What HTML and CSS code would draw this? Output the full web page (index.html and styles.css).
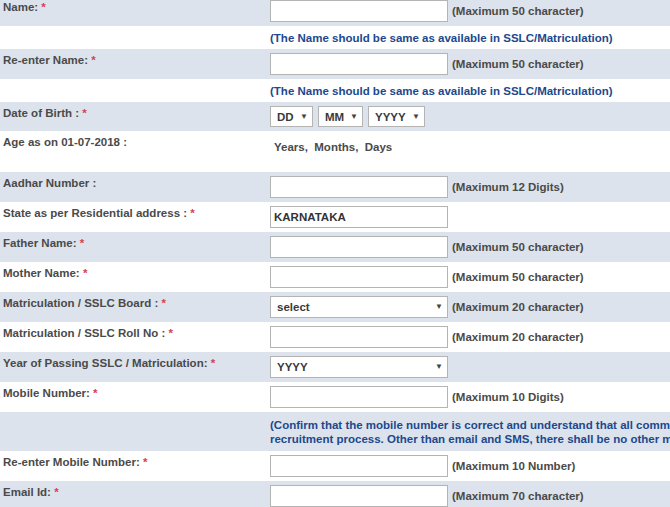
FILE: index.html
```html
<!DOCTYPE html>
<html>
<head>
<meta charset="utf-8">
<link rel="stylesheet" href="styles.css">
</head>
<body>
<form class="form">
  <div class="row">
    <div class="lbl">Name: <span class="req">*</span></div>
    <div class="fld"><input class="txt" type="text"><span class="hint">(Maximum 50 character)</span></div>
  </div>
  <div class="row note">
    <div class="lbl"></div>
    <div class="fld"><span class="info">(The Name should be same as available in SSLC/Matriculation)</span></div>
  </div>
  <div class="row">
    <div class="lbl">Re-enter Name: <span class="req">*</span></div>
    <div class="fld"><input class="txt" type="text"><span class="hint">(Maximum 50 character)</span></div>
  </div>
  <div class="row note">
    <div class="lbl"></div>
    <div class="fld"><span class="info">(The Name should be same as available in SSLC/Matriculation)</span></div>
  </div>
  <div class="row">
    <div class="lbl">Date of Birth : <span class="req">*</span></div>
    <div class="fld dob">
      <span class="sel"><select class="s-dd"><option>DD</option></select></span>
      <span class="sel"><select class="s-mm"><option>MM</option></select></span>
      <span class="sel"><select class="s-yy"><option>YYYY</option></select></span>
    </div>
  </div>
  <div class="row age">
    <div class="lbl">Age as on 01-07-2018 :</div>
    <div class="fld"><span>Years,&nbsp; Months,&nbsp; Days</span></div>
  </div>
  <div class="row">
    <div class="lbl">Aadhar Number :</div>
    <div class="fld"><input class="txt" type="text"><span class="hint">(Maximum 12 Digits)</span></div>
  </div>
  <div class="row">
    <div class="lbl">State as per Residential address : <span class="req">*</span></div>
    <div class="fld"><input class="txt" type="text" value="KARNATAKA"></div>
  </div>
  <div class="row">
    <div class="lbl">Father Name: <span class="req">*</span></div>
    <div class="fld"><input class="txt" type="text"><span class="hint">(Maximum 50 character)</span></div>
  </div>
  <div class="row">
    <div class="lbl">Mother Name: <span class="req">*</span></div>
    <div class="fld"><input class="txt" type="text"><span class="hint">(Maximum 50 character)</span></div>
  </div>
  <div class="row">
    <div class="lbl">Matriculation / SSLC Board : <span class="req">*</span></div>
    <div class="fld"><span class="sel"><select class="s-wide"><option>select</option></select></span><span class="hint">(Maximum 20 character)</span></div>
  </div>
  <div class="row">
    <div class="lbl">Matriculation / SSLC Roll No : <span class="req">*</span></div>
    <div class="fld"><input class="txt" type="text"><span class="hint">(Maximum 20 character)</span></div>
  </div>
  <div class="row">
    <div class="lbl">Year of Passing SSLC / Matriculation: <span class="req">*</span></div>
    <div class="fld"><span class="sel"><select class="s-wide"><option>YYYY</option></select></span></div>
  </div>
  <div class="row">
    <div class="lbl">Mobile Number: <span class="req">*</span></div>
    <div class="fld"><input class="txt" type="text"><span class="hint">(Maximum 10 Digits)</span></div>
  </div>
  <div class="row note long">
    <div class="lbl"></div>
    <div class="fld"><span class="info">(Confirm that the mobile number is correct and understand that all communication regarding this recruitment will be sent through SMS and email during the<br>recruitment process. Other than email and SMS, there shall be no other mode of communication.)</span></div>
  </div>
  <div class="row">
    <div class="lbl">Re-enter Mobile Number: <span class="req">*</span></div>
    <div class="fld"><input class="txt" type="text"><span class="hint">(Maximum 10 Number)</span></div>
  </div>
  <div class="row">
    <div class="lbl">Email Id: <span class="req">*</span></div>
    <div class="fld"><input class="txt" type="text"><span class="hint">(Maximum 70 character)</span></div>
  </div>
</form>
</body>
</html>
```

FILE: styles.css
```css
html, body {
  margin: 0;
  padding: 0;
  overflow: hidden;
  background: #ffffff;
}

body {
  font-family: "Liberation Sans", Arial, sans-serif;
  font-weight: bold;
  font-size: 11.5px;
  line-height: 14px;
  color: #4a4a4a;
}

.form {
  margin: -4px 0 0 0;
}

.row {
  display: grid;
  grid-template-columns: 268px minmax(0, 1fr);
  background: #ffffff;
}

.row:nth-child(odd) {
  background: #dce3ec;
}

.lbl {
  padding: 4px 0 0 3px;
  white-space: nowrap;
}

.req {
  color: #d8404f;
}

.fld {
  display: flex;
  align-items: center;
  gap: 4px;
  padding: 4px 0 4px 2px;
  min-width: 0;
  overflow: hidden;
}

.note .fld {
  padding: 5px 0 4px 2px;
}

.note.long .fld {
  padding: 6px 0 5px 2px;
}

.info {
  color: #21488c;
  white-space: nowrap;
}

.age .fld {
  align-items: flex-start;
  padding: 9px 0 18px 6px;
}

.txt {
  box-sizing: border-box;
  width: 178px;
  height: 22px;
  margin: 0;
  padding: 0 3px;
  border: 1px solid #b4b4b4;
  border-radius: 0;
  background: #ffffff;
  font: inherit;
  color: #333333;
  flex: none;
}

.hint {
  white-space: nowrap;
}

.dob {
  gap: 5px;
}

.sel {
  position: relative;
  display: inline-block;
  flex: none;
}

.sel select {
  -webkit-appearance: none;
  appearance: none;
  box-sizing: border-box;
  display: block;
  height: 21px;
  margin: 0;
  padding: 0 14px 0 6px;
  border: 1px solid #b4b4b4;
  border-radius: 0;
  background: #ffffff;
  font: inherit;
  color: #3a3a3a;
}

.sel::after {
  content: "\25BC";
  position: absolute;
  right: 5px;
  top: 6px;
  font-size: 8px;
  line-height: 9px;
  color: #444444;
  pointer-events: none;
}

.s-dd { width: 43px; }
.s-mm { width: 45px; }
.s-yy { width: 57px; }
.s-wide { width: 178px; }
.sel .s-wide { height: 22px; }
```
